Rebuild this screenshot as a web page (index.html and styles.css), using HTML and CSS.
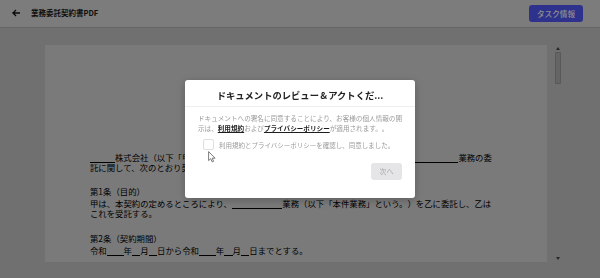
FILE: index.html
```html
<!DOCTYPE html>
<html lang="ja">
<head>
<meta charset="utf-8">
<title>業務委託契約書PDF</title>
<link rel="stylesheet" href="styles.css">
</head>
<body>
<div class="app">
  <header class="topbar">
    <button class="back" aria-label="戻る">
      <svg width="8" height="8" viewBox="0 0 8 8"><path d="M7.6 4H1M3.6 1.4L1 4l2.6 2.6" fill="none" stroke="#111" stroke-width="1.3" stroke-linecap="square"/></svg>
    </button>
    <h1 class="title">業務委託契約書PDF</h1>
    <button class="task-btn">タスク情報</button>
  </header>
  <main class="viewer">
    <div class="page">
      <p class="para"><span class="blank b25"></span>株式会社（以下「甲」という。）と<span class="blank b23"></span>株式会社（以下「乙」という。）は、<span class="blank b45"></span>業務の委託に関して、次のとおり契約を締結する。</p>
      <section class="article">
        <h2 class="art-title">第1条（目的）</h2>
        <p class="para">甲は、本契約の定めるところにより、<span class="blank b50"></span>業務（以下「本件業務」という。）を乙に委託し、乙はこれを受託する。</p>
      </section>
      <section class="article">
        <h2 class="art-title">第2条（契約期間）</h2>
        <p class="para">令和<span class="blank b4"></span>年<span class="blank b2"></span>月<span class="blank b2"></span>日から令和<span class="blank b4"></span>年<span class="blank b2"></span>月<span class="blank b2"></span>日までとする。</p>
      </section>
    </div>
    <div class="scrollbar">
      <span class="sb-btn"><span class="tri up"></span></span>
      <span class="thumb"></span>
      <span class="sb-track"></span>
      <span class="sb-btn"><span class="tri down"></span></span>
    </div>
  </main>
</div>

<div class="backdrop">
  <div class="modal" role="dialog">
    <div class="modal-head">
      <h3 class="modal-title">ドキュメントのレビュー＆アクトくだ...</h3>
    </div>
    <div class="modal-body">
      <p class="notice">ドキュメントへの署名に同意することにより、お客様の個人情報の開示は、<a class="link">利用規約</a>および<a class="link">プライバシーポリシー</a>が適用されます。。</p>
      <label class="agree">
        <span class="checkbox"></span>
        <span class="agree-text">利用規約とプライバシーポリシーを確認し、同意しました。</span>
      </label>
    </div>
    <div class="modal-foot">
      <button class="next-btn" disabled>次へ</button>
    </div>
  </div>
</div>

<svg class="cursor" width="9" height="12" viewBox="0 0 9 12"><path d="M0.6 0.6V9.6L2.7 7.7L4.2 10.9L5.6 10.3L4.2 7.2H7.1Z" fill="#fff" stroke="#5a5a5a" stroke-width="0.8" stroke-linejoin="round"/></svg>
</body>
</html>
```

FILE: styles.css
```css
* {
  box-sizing: border-box;
  margin: 0;
  padding: 0;
}

html,
body {
  width: 600px;
  height: 278px;
  overflow: hidden;
}

body {
  position: relative;
  font-family: "Noto Sans CJK JP", "Noto Sans", sans-serif;
  background: #cdcdcd;
  text-spacing-trim: space-all;
}

.app {
  display: flex;
  flex-direction: column;
  height: 278px;
}

/* header */
.topbar {
  flex: none;
  height: 28px;
  display: flex;
  align-items: center;
  padding: 0 17px 1px 12px;
  background: #e2e2e2;
  border-bottom: 1px solid #bababa;
}

.back {
  display: flex;
  width: 8px;
  height: 8px;
  margin-right: 11px;
  border: 0;
  background: none;
}

.title {
  flex: 1;
  font-size: 7.5px;
  font-weight: 700;
  line-height: 10px;
  color: #1c1c1c;
}

.task-btn {
  height: 17px;
  padding: 0 8px;
  border: 0;
  border-radius: 3px;
  background: #555bff;
  color: #fff;
  font-family: "Noto Sans CJK JP", sans-serif;
  font-size: 7.6px;
  font-weight: 500;
  line-height: 17px;
}

/* document viewer */
.viewer {
  flex: 1;
  display: flex;
  gap: 6px;
  padding: 17px 0 0 45px;
}

.page {
  flex: none;
  width: 502px;
  height: 217px;
  overflow: hidden;
  padding: 107.5px 51px 0 45px;
  background: #dfdfdf;
  color: #000;
  font-size: 8.4px;
  line-height: 9.3px;
}

.para {
  word-break: break-all;
}

.article {
  margin-top: 15.5px;
}

.art-title {
  font-size: 8.4px;
  font-weight: 400;
  margin-bottom: 2.5px;
}

.blank {
  display: inline-block;
  height: 1px;
  border-bottom: 1px solid #000;
  vertical-align: -2px;
}

.b2 { width: 8.4px; }
.b4 { width: 16.8px; }
.b23 { width: 23px; }
.b25 { width: 25px; }
.b45 { width: 45px; }
.b50 { width: 50.4px; }

/* scrollbar */
.scrollbar {
  flex: none;
  width: 10px;
  height: 217px;
  display: flex;
  flex-direction: column;
  align-items: center;
}

.sb-btn {
  flex: none;
  height: 7px;
  width: 10px;
  display: flex;
  align-items: center;
  justify-content: center;
}

.tri {
  width: 0;
  height: 0;
  border-left: 2.5px solid transparent;
  border-right: 2.5px solid transparent;
}

.tri.up {
  border-bottom: 3px solid #4a4a4a;
}

.tri.down {
  border-top: 3px solid #4a4a4a;
}

.thumb {
  flex: none;
  width: 6px;
  height: 32px;
  background: #b8b8b8;
  border: 1px solid #a2a2a2;
  border-radius: 1px;
}

.sb-track {
  flex: 1;
}

/* modal */
.backdrop {
  position: fixed;
  inset: 0;
  display: flex;
  align-items: center;
  justify-content: center;
  background: rgba(0, 0, 0, 0.45);
}

.modal {
  width: 230px;
  height: 118px;
  display: flex;
  flex-direction: column;
  background: #fff;
  border-radius: 3px;
  box-shadow: 0 2px 10px rgba(0, 0, 0, 0.25);
}

.modal-head {
  padding: 9px 31px 5px;
  border-bottom: 1px solid #efefef;
}

.modal-title {
  font-size: 9.3px;
  font-weight: 700;
  line-height: 12px;
  text-align: center;
  white-space: nowrap;
  color: #222;
}

.modal-body {
  padding: 6px 11px 0 13px;
}

.notice {
  font-size: 6.6px;
  line-height: 10px;
  color: #9a9a9a;
}

.link {
  color: #1e1e1e;
  font-weight: 700;
  text-decoration: underline;
}

.agree {
  display: flex;
  align-items: center;
  gap: 5px;
  margin-top: 6px;
  padding-left: 5px;
}

.checkbox {
  flex: none;
  width: 11px;
  height: 11px;
  border: 1px solid #dedede;
  border-radius: 2px;
  background: #fff;
}

.agree-text {
  font-size: 6.5px;
  line-height: 10px;
  color: #9a9a9a;
}

.modal-foot {
  display: flex;
  justify-content: flex-end;
  padding: 13px 13px 0;
}

.next-btn {
  width: 31px;
  height: 17px;
  border: 0;
  border-radius: 3px;
  background: #e5e5e8;
  color: #a9a9a9;
  font-family: "Noto Sans CJK JP", sans-serif;
  font-size: 7px;
  line-height: 17px;
}

.cursor {
  position: absolute;
  left: 208px;
  top: 151px;
}
```
